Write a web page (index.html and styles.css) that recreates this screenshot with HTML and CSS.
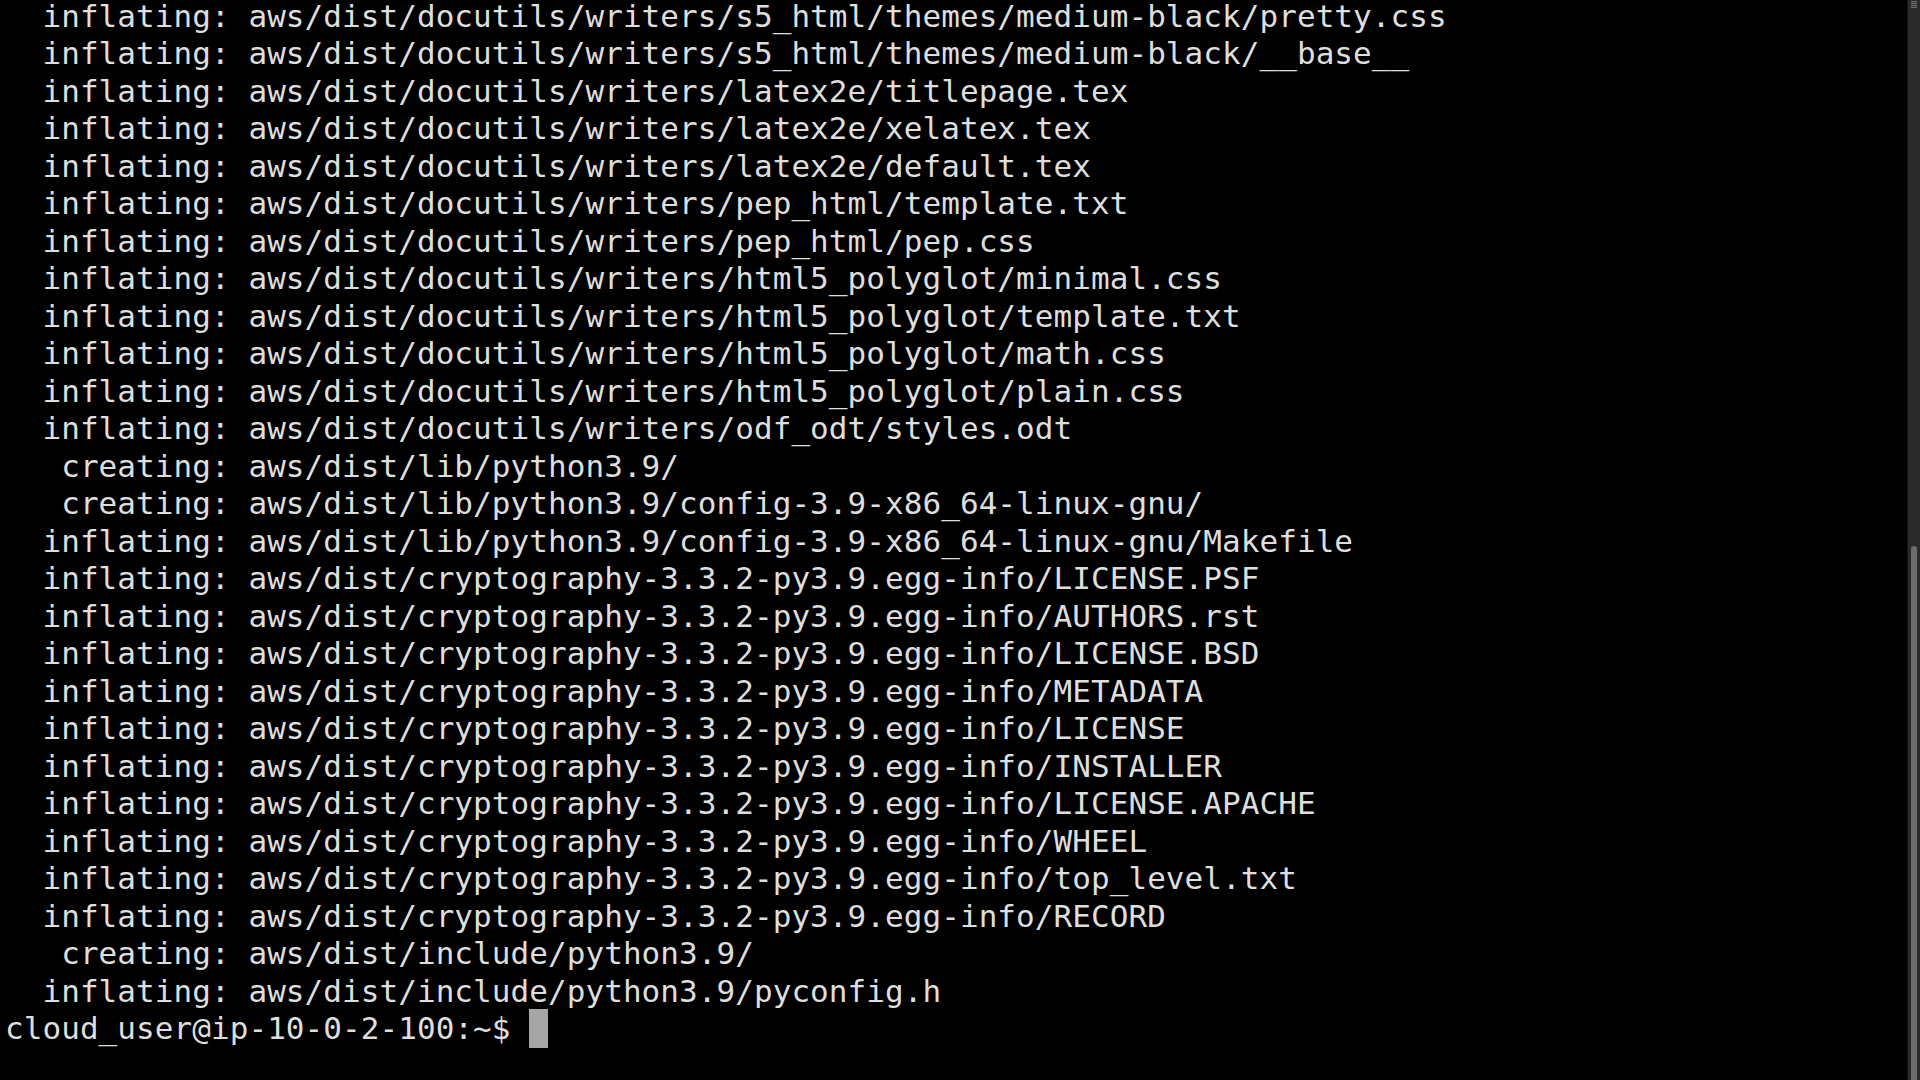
FILE: index.html
```html
<!DOCTYPE html>
<html lang="en">
<head>
<meta charset="utf-8">
<title>Terminal</title>
<link rel="stylesheet" href="styles.css">
</head>
<body>
<div class="window">
  <div class="term">
    <div class="line">  inflating: aws/dist/docutils/writers/s5_html/themes/medium-black/pretty.css</div>
    <div class="line">  inflating: aws/dist/docutils/writers/s5_html/themes/medium-black/__base__</div>
    <div class="line">  inflating: aws/dist/docutils/writers/latex2e/titlepage.tex</div>
    <div class="line">  inflating: aws/dist/docutils/writers/latex2e/xelatex.tex</div>
    <div class="line">  inflating: aws/dist/docutils/writers/latex2e/default.tex</div>
    <div class="line">  inflating: aws/dist/docutils/writers/pep_html/template.txt</div>
    <div class="line">  inflating: aws/dist/docutils/writers/pep_html/pep.css</div>
    <div class="line">  inflating: aws/dist/docutils/writers/html5_polyglot/minimal.css</div>
    <div class="line">  inflating: aws/dist/docutils/writers/html5_polyglot/template.txt</div>
    <div class="line">  inflating: aws/dist/docutils/writers/html5_polyglot/math.css</div>
    <div class="line">  inflating: aws/dist/docutils/writers/html5_polyglot/plain.css</div>
    <div class="line">  inflating: aws/dist/docutils/writers/odf_odt/styles.odt</div>
    <div class="line">   creating: aws/dist/lib/python3.9/</div>
    <div class="line">   creating: aws/dist/lib/python3.9/config-3.9-x86_64-linux-gnu/</div>
    <div class="line">  inflating: aws/dist/lib/python3.9/config-3.9-x86_64-linux-gnu/Makefile</div>
    <div class="line">  inflating: aws/dist/cryptography-3.3.2-py3.9.egg-info/LICENSE.PSF</div>
    <div class="line">  inflating: aws/dist/cryptography-3.3.2-py3.9.egg-info/AUTHORS.rst</div>
    <div class="line">  inflating: aws/dist/cryptography-3.3.2-py3.9.egg-info/LICENSE.BSD</div>
    <div class="line">  inflating: aws/dist/cryptography-3.3.2-py3.9.egg-info/METADATA</div>
    <div class="line">  inflating: aws/dist/cryptography-3.3.2-py3.9.egg-info/LICENSE</div>
    <div class="line">  inflating: aws/dist/cryptography-3.3.2-py3.9.egg-info/INSTALLER</div>
    <div class="line">  inflating: aws/dist/cryptography-3.3.2-py3.9.egg-info/LICENSE.APACHE</div>
    <div class="line">  inflating: aws/dist/cryptography-3.3.2-py3.9.egg-info/WHEEL</div>
    <div class="line">  inflating: aws/dist/cryptography-3.3.2-py3.9.egg-info/top_level.txt</div>
    <div class="line">  inflating: aws/dist/cryptography-3.3.2-py3.9.egg-info/RECORD</div>
    <div class="line">   creating: aws/dist/include/python3.9/</div>
    <div class="line">  inflating: aws/dist/include/python3.9/pyconfig.h</div>
    <div class="line">cloud_user@ip-10-0-2-100:~$ <span class="cursor"></span></div>
  </div>
  <div class="scrollbar">
    <div class="grip"></div>
    <div class="track"></div>
    <div class="thumb"></div>
  </div>
</div>
</body>
</html>
```
FILE: styles.css
```css
html, body {
  margin: 0;
  padding: 0;
  background: #000;
  width: 1920px;
  height: 1080px;
  overflow: hidden;
}

.window {
  display: flex;
  width: 1920px;
  height: 1080px;
}

.term {
  flex: 1;
  margin-top: -2.5px;
  padding-left: 5px;
  font-family: "DejaVu Sans Mono", "Liberation Mono", monospace;
  font-size: 31px;
  letter-spacing: 0.06px;
  line-height: 37.5px;
  color: #dedede;
}

.line {
  white-space: pre;
  height: 37.5px;
}

.cursor {
  display: inline-block;
  width: 19px;
  height: 39px;
  vertical-align: top;
  margin-top: -1.5px;
  background: #a6a6a6;
}

.scrollbar {
  width: 12px;
  display: flex;
  flex-direction: column;
  align-items: center;
  background: #2a2a2a;
  border-left: 1px solid #141414;
}

.grip {
  width: 6px;
  height: 7px;
  margin-top: 1px;
  background: repeating-linear-gradient(#6a6a6a 0 1px, #3a3a3a 1px 2px);
}

.track {
  flex: 0 0 538px;
}

.thumb {
  flex: 1;
  width: 6px;
  background: #6c6c6c;
  border-radius: 3px 3px 0 0;
}
```
